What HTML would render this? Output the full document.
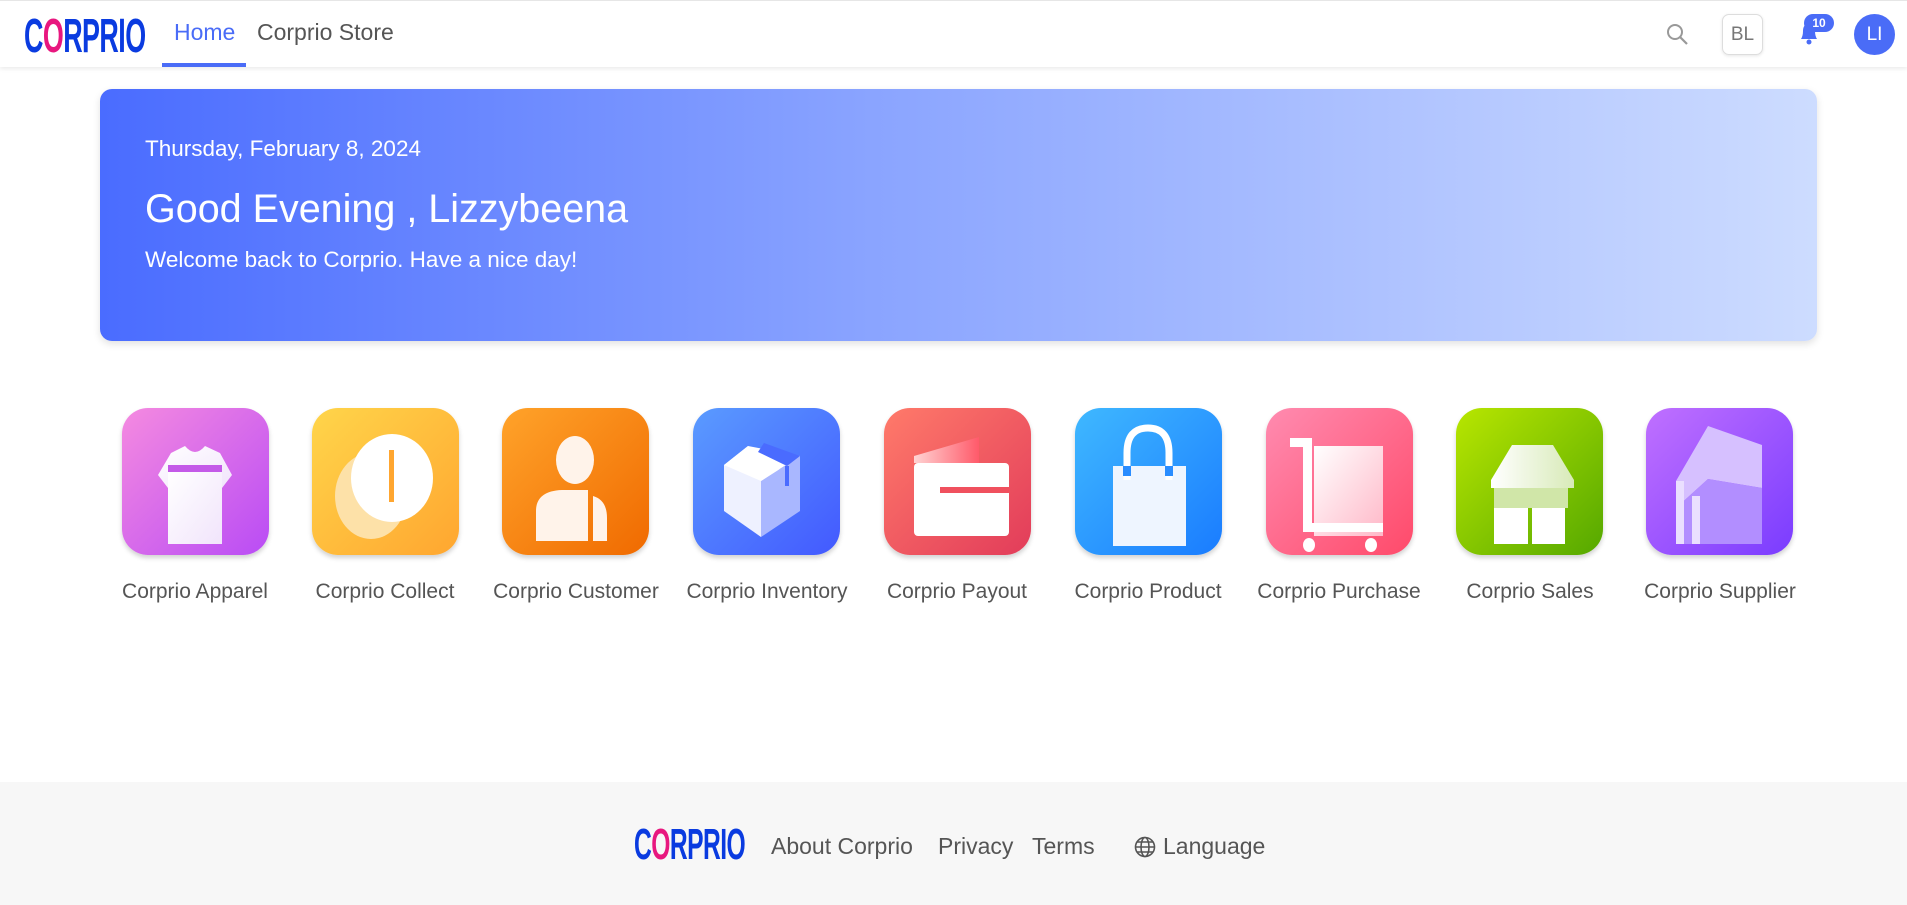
<!DOCTYPE html>
<html><head><meta charset="utf-8"><style>
*{margin:0;padding:0;box-sizing:border-box}
body{width:1907px;height:905px;background:#fff;font-family:"Liberation Sans",sans-serif;position:relative;overflow:hidden;color:#555}
.hdr{position:absolute;left:0;top:0;width:1907px;height:67px;background:#fff;border-top:1px solid #e6e6e6;box-shadow:0 2px 4px rgba(0,0,0,.08)}
.logo{position:absolute;font-weight:bold;color:#0a3be0;letter-spacing:-1px;transform:scaleX(.56);transform-origin:left;white-space:nowrap}
.nav{position:absolute;top:18px;font-size:23px}
.banner{position:absolute;left:100px;top:89px;width:1717px;height:252px;border-radius:12px;background:linear-gradient(90deg,#4a6cff 0%,#8aa4ff 45%,#cddcff 100%);box-shadow:0 3px 8px rgba(0,0,0,.12);color:#fff}
.app{position:absolute;top:408px;width:147px;height:147px;border-radius:26px;box-shadow:0 3px 5px rgba(0,0,0,.18);overflow:hidden}
.app svg{width:147px;height:147px}
.lbl{position:absolute;top:580px;width:220px;text-align:center;font-size:21px;color:#555}
.foot{position:absolute;left:0;top:782px;width:1907px;height:123px;background:#f7f7f7}
.fl{position:absolute;top:833px;font-size:23px;color:#555}
</style></head><body>
<div class="hdr">
 <div class="logo" style="left:24px;top:8px;font-size:48px">C<span style="color:#e8177f">O</span>RPRIO</div>
 <div class="nav" style="left:174px;color:#4a6cf7">Home</div>
 <div style="position:absolute;left:162px;top:62px;width:84px;height:4px;background:#4a6cf7"></div>
 <div class="nav" style="left:257px;color:#555">Corprio Store</div>
 <svg style="position:absolute;left:1665px;top:21px" width="24" height="24" viewBox="0 0 24 24"><circle cx="10" cy="10" r="7" fill="none" stroke="#999" stroke-width="2"/><line x1="15" y1="15" x2="22" y2="22" stroke="#999" stroke-width="2.2"/></svg>
 <div style="position:absolute;left:1722px;top:13px;width:41px;height:41px;border:1px solid #ddd;border-radius:7px;box-shadow:0 1px 3px rgba(0,0,0,.1);font-size:19px;color:#777;text-align:center;line-height:40px">BL</div>
 <svg style="position:absolute;left:1797px;top:19px" width="24" height="26" viewBox="0 0 24 26"><path d="M4 19 Q6 16 6 11 Q6 4 12 4 Q18 4 18 11 Q18 16 20 19Z" fill="#4a6cf7"/><circle cx="12" cy="22" r="2.5" fill="#4a6cf7"/></svg>
 <div style="position:absolute;left:1804px;top:13px;width:30px;height:18px;border-radius:9px;background:#4a6cf7;color:#fff;font-size:12px;font-weight:bold;text-align:center;line-height:18px">10</div>
 <div style="position:absolute;left:1854px;top:13px;width:41px;height:41px;border-radius:50%;background:#4a6cf7;color:#fff;font-size:19px;text-align:center;line-height:41px">LI</div>
</div>

<div class="banner">
 <div style="position:absolute;left:45px;top:47px;font-size:22.5px">Thursday, February 8, 2024</div>
 <div style="position:absolute;left:45px;top:98px;font-size:39.5px">Good Evening , Lizzybeena</div>
 <div style="position:absolute;left:45px;top:158px;font-size:22.5px">Welcome back to Corprio. Have a nice day!</div>
</div>

<div class="app" style="left:122px;background:linear-gradient(135deg,#f58ae0,#b94cf5)"><svg viewBox="0 0 147 147"><defs><linearGradient id="w" x1="0" y1="0" x2="1" y2="1"><stop offset="0" stop-color="#fff"/><stop offset="1" stop-color="#f1e4fb"/></linearGradient></defs><path d="M49 45 L63 38 Q73 50 83 38 L98 45 L110 67 L100 80 L100 57 L46 57 L46 80 L36 67Z" fill="url(#w)"/><rect x="46" y="57" width="54" height="7" fill="#c45ae8"/><rect x="46" y="64" width="54" height="72" fill="url(#w)"/></svg></div>
<div class="app" style="left:312px;background:linear-gradient(135deg,#ffd54a,#ffa630)"><svg viewBox="0 0 147 147"><ellipse cx="59" cy="88" rx="36" ry="43" fill="#fde1a8"/><ellipse cx="80" cy="70" rx="41" ry="44" fill="#fff"/><rect x="77" y="42" width="5" height="52" fill="#ffa630"/></svg></div>
<div class="app" style="left:502px;background:linear-gradient(135deg,#ffa32a,#f06a00)"><svg viewBox="0 0 147 147"><ellipse cx="73" cy="52" rx="19" ry="24" fill="#fff3ea"/><path d="M34 133 L34 103 Q34 83 60 82 L86 82 L86 133Z" fill="#fff3ea"/><path d="M91 88 Q105 92 105 110 L105 133 L91 133Z" fill="#fff3ea"/></svg></div>
<div class="app" style="left:693px;background:linear-gradient(135deg,#5a9bff,#4359ff)"><svg viewBox="0 0 147 147"><path d="M31 57 L55 38 L90 64 L90 100 L68 129 L31 103Z" fill="#eef1ff"/><path d="M68 73 L107 48 L107 103 L68 129Z" fill="#a9b7ff"/><path d="M55 38 L107 48 L68 73 L31 57Z" fill="#fff"/><path d="M71 35 L107 48 L94 58 L65 44Z" fill="#4a6bff"/><rect x="92" y="58" width="4" height="20" fill="#4a6bff"/></svg></div>
<div class="app" style="left:884px;background:linear-gradient(135deg,#ff7a6a,#e23c5a)"><svg viewBox="0 0 147 147"><defs><linearGradient id="p" x1="0" y1="0" x2="1" y2="0"><stop offset="0" stop-color="#ffd3d3"/><stop offset="1" stop-color="#ff5a6a"/></linearGradient></defs><path d="M30 48 L95 29 L95 55 L30 55Z" fill="url(#p)"/><rect x="30" y="55" width="95" height="73" rx="4" fill="#fff"/><rect x="56" y="79" width="70" height="6" fill="#f0505e"/></svg></div>
<div class="app" style="left:1075px;background:linear-gradient(135deg,#3fb8ff,#1a7cff)"><svg viewBox="0 0 147 147"><rect x="38" y="58" width="73" height="80" fill="#eef5ff"/><path d="M52 72 L52 45 Q52 20 73 20 Q94 20 94 45 L94 72" fill="none" stroke="#fff" stroke-width="7"/><rect x="48" y="58" width="8" height="10" fill="#2a8dff"/><rect x="90" y="58" width="8" height="10" fill="#2a8dff"/></svg></div>
<div class="app" style="left:1266px;background:linear-gradient(135deg,#ff8bb0,#ff4a6a)"><svg viewBox="0 0 147 147"><defs><linearGradient id="c" x1="0" y1="0" x2="1" y2="1"><stop offset="0" stop-color="#fff"/><stop offset="1" stop-color="#ffb8c8"/></linearGradient></defs><rect x="48" y="38" width="69" height="90" fill="url(#c)"/><path d="M24 30 L46 30 L46 115 L117 115 L117 124 L37 124 L37 39 L24 39Z" fill="#fff"/><ellipse cx="43" cy="137" rx="6" ry="7" fill="#fff"/><ellipse cx="105" cy="137" rx="6" ry="7" fill="#fff"/></svg></div>
<div class="app" style="left:1456px;background:linear-gradient(135deg,#b8e600,#55a800)"><svg viewBox="0 0 147 147"><defs><linearGradient id="s" x1="0" y1="0" x2="1" y2="0"><stop offset="0" stop-color="#fff"/><stop offset="1" stop-color="#d8eab8"/></linearGradient></defs><path d="M35 72 L56 37 L97 37 L118 72 L118 80 L35 80Z" fill="url(#s)"/><rect x="38" y="80" width="74" height="20" fill="#d0e6a8"/><rect x="38" y="100" width="34" height="36" fill="#fff"/><rect x="76" y="100" width="33" height="36" fill="#fff"/></svg></div>
<div class="app" style="left:1646px;background:linear-gradient(135deg,#c070ff,#7a3cff)"><svg viewBox="0 0 147 147"><path d="M30 73 L62 18 L116 37 L116 80 L62 71 L30 100Z" fill="#d6c0ff"/><path d="M30 100 L62 71 L116 80 L116 136 L30 136Z" fill="#b28eff"/><rect x="30" y="73" width="8" height="63" fill="#eadfff"/><rect x="46" y="88" width="8" height="48" fill="#eadfff"/></svg></div>

<div class="lbl" style="left:85px">Corprio Apparel</div>
<div class="lbl" style="left:275px">Corprio Collect</div>
<div class="lbl" style="left:466px">Corprio Customer</div>
<div class="lbl" style="left:657px">Corprio Inventory</div>
<div class="lbl" style="left:847px">Corprio Payout</div>
<div class="lbl" style="left:1038px">Corprio Product</div>
<div class="lbl" style="left:1229px">Corprio Purchase</div>
<div class="lbl" style="left:1420px">Corprio Sales</div>
<div class="lbl" style="left:1610px">Corprio Supplier</div>

<div class="foot"></div>
<div class="logo" style="left:634px;top:820px;font-size:44px">C<span style="color:#e8177f">O</span>RPRIO</div>
<div class="fl" style="left:771px">About Corprio</div>
<div class="fl" style="left:938px">Privacy</div>
<div class="fl" style="left:1032px">Terms</div>
<svg style="position:absolute;left:1134px;top:836px" width="22" height="22" viewBox="0 0 22 22"><g fill="none" stroke="#555" stroke-width="1.6"><circle cx="11" cy="11" r="9.5"/><ellipse cx="11" cy="11" rx="4" ry="9.5"/><line x1="1.5" y1="11" x2="20.5" y2="11"/><path d="M3 6 H19 M3 16 H19"/></g></svg>
<div class="fl" style="left:1163px">Language</div>
</body></html>
